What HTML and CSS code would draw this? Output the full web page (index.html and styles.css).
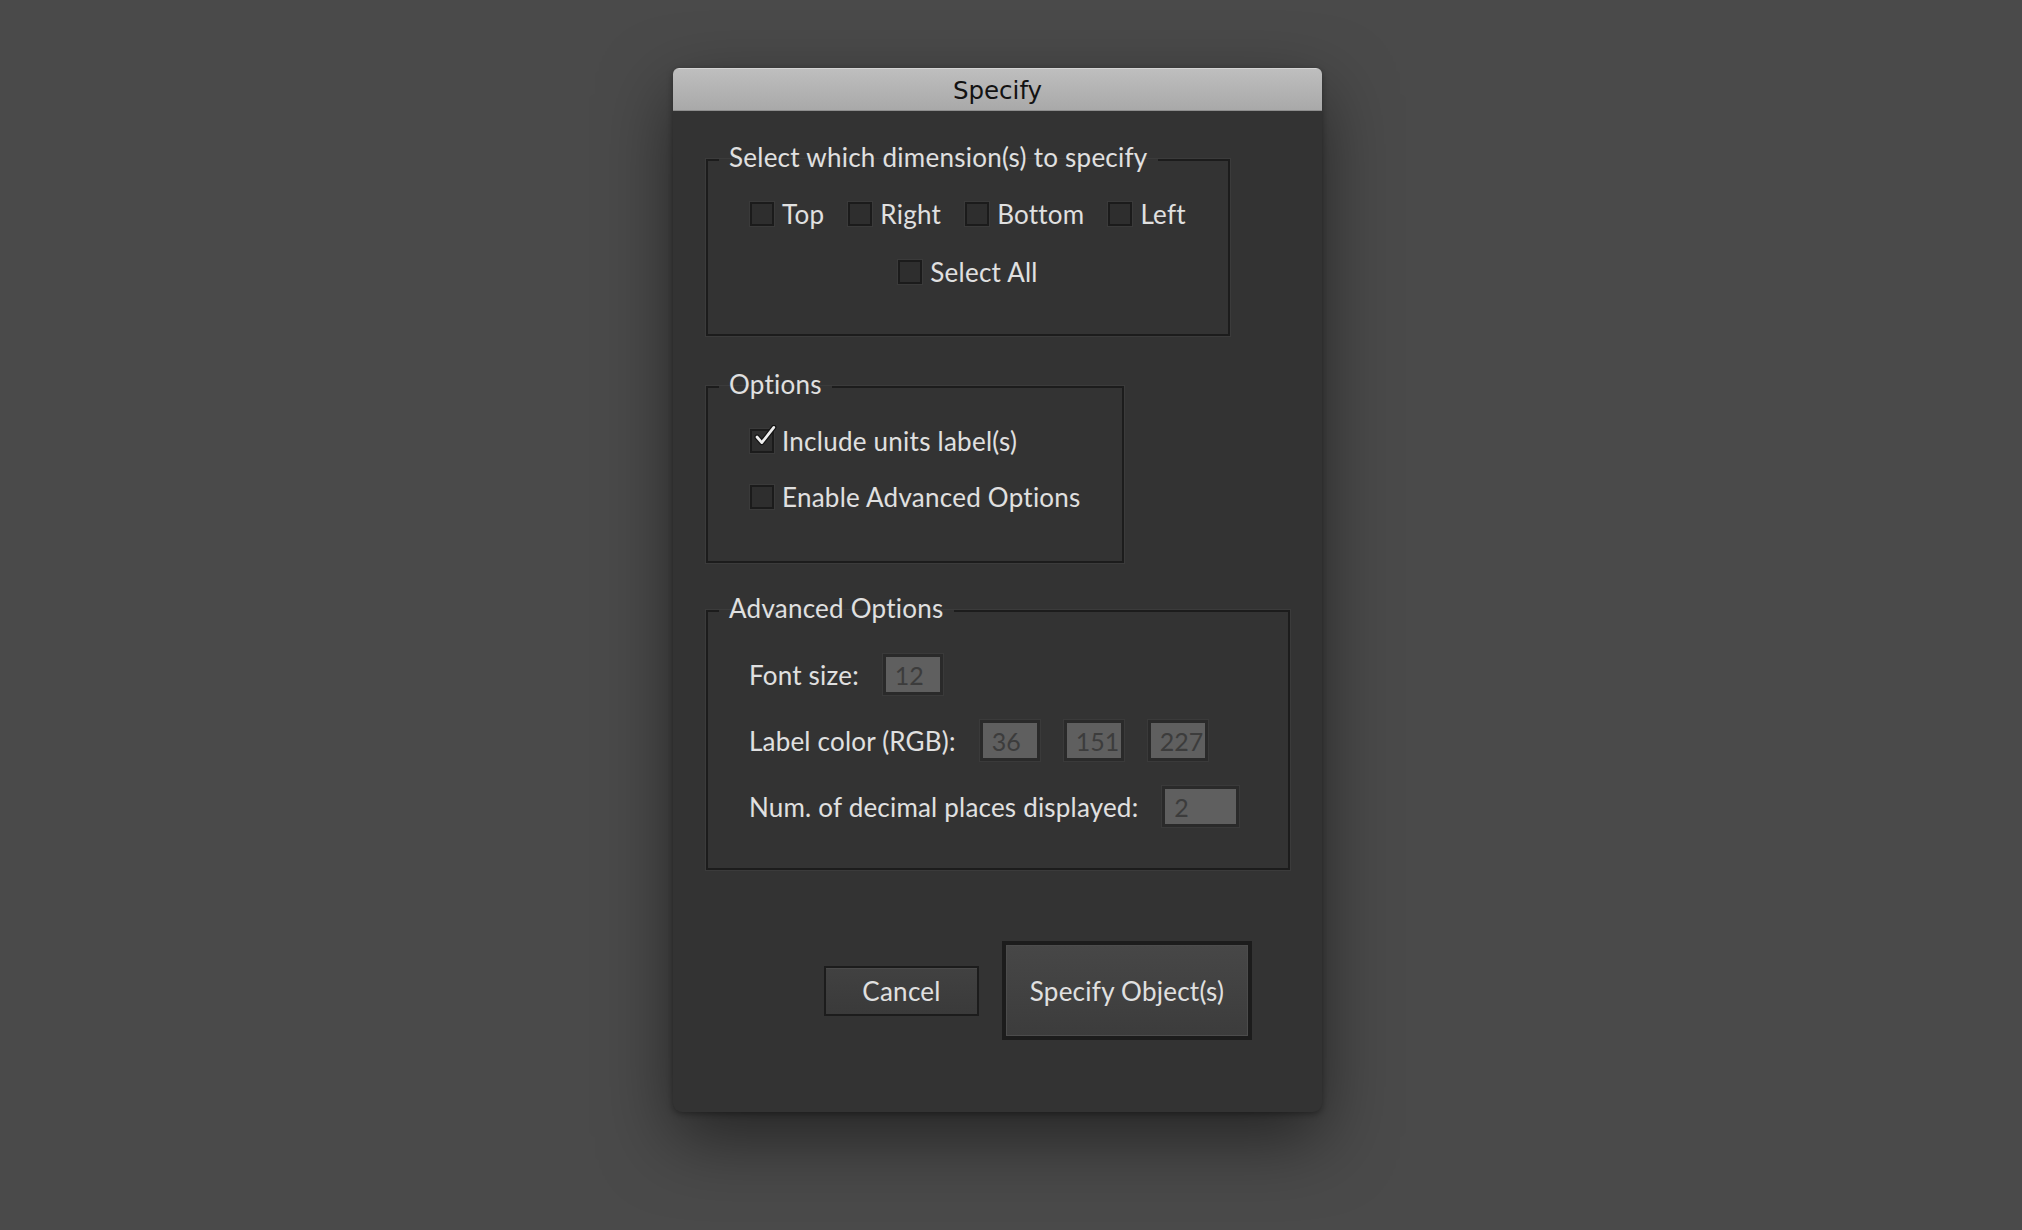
FILE: index.html
```html
<!DOCTYPE html>
<html>
<head>
<meta charset="utf-8">
<link rel="stylesheet" href="styles.css">
</head>
<body>
<div class="dialog">
  <div class="titlebar">Specify</div>
  <div class="dialog-body">
    <fieldset class="group group-dims">
      <legend>Select which dimension(s) to specify</legend>
      <div class="group-inner">
        <div class="check-row centered">
          <label class="check"><span class="box"></span><span>Top</span></label>
          <label class="check"><span class="box"></span><span>Right</span></label>
          <label class="check"><span class="box"></span><span>Bottom</span></label>
          <label class="check"><span class="box"></span><span>Left</span></label>
        </div>
        <div class="check-row centered">
          <label class="check"><span class="box"></span><span>Select All</span></label>
        </div>
      </div>
    </fieldset>

    <fieldset class="group group-options">
      <legend>Options</legend>
      <div class="group-inner">
        <div class="check-row">
          <label class="check"><span class="box checked"><svg class="tick" viewBox="0 0 30 30" width="30" height="30"><path d="M5 15 L11 22 L26 3" fill="none" stroke="#141414" stroke-width="6.5" stroke-linecap="round" stroke-linejoin="round"/><path d="M5 15 L11 22 L26 3" fill="none" stroke="#ededed" stroke-width="3.4" stroke-linecap="round" stroke-linejoin="round"/></svg></span><span>Include units label(s)</span></label>
        </div>
        <div class="check-row">
          <label class="check"><span class="box"></span><span>Enable Advanced Options</span></label>
        </div>
      </div>
    </fieldset>

    <fieldset class="group group-advanced">
      <legend>Advanced Options</legend>
      <div class="group-inner">
        <div class="field-row">
          <span class="field-label">Font size:</span>
          <span class="input">12</span>
        </div>
        <div class="field-row">
          <span class="field-label">Label color (RGB):</span>
          <span class="input">36</span>
          <span class="input">151</span>
          <span class="input">227</span>
        </div>
        <div class="field-row">
          <span class="field-label">Num. of decimal places displayed:</span>
          <span class="input wide">2</span>
        </div>
      </div>
    </fieldset>

    <div class="button-row">
      <button class="btn btn-cancel">Cancel</button>
      <button class="btn btn-default">Specify Object(s)</button>
    </div>
  </div>
</div>
</body>
</html>
```

FILE: styles.css
```css
html, body {
  margin: 0;
  padding: 0;
}

body {
  background: #4a4a4a;
  width: 2022px;
  height: 1230px;
  overflow: hidden;
  font-family: Lato, "Noto Sans", sans-serif;
  color: #e0e0e0;
}

.dialog {
  margin: 68px 0 0 673px;
  width: 649px;
  height: 1044px;
  background: #333333;
  border-radius: 6px 6px 9px 9px;
  box-shadow: 0 26px 70px rgba(0, 0, 0, 0.5), 0 2px 6px rgba(0, 0, 0, 0.35);
  overflow: hidden;
}

.titlebar {
  box-sizing: border-box;
  height: 43px;
  padding-top: 4px;
  border-top: 1px solid #d4d4d4;
  border-bottom: 1px solid #8e8e8e;
  background: linear-gradient(#bebebe, #a9a9a9);
  color: #121212;
  font-family: "DejaVu Sans", "Liberation Sans", sans-serif;
  font-size: 24.5px;
  line-height: 36px;
  text-align: center;
}

.dialog-body {
  padding: 31px 0 0 33px;
}

.group {
  box-sizing: border-box;
  margin: 0;
  padding: 0;
  border: 2px solid #1c1c1c;
  box-shadow: 0 0 0 1px #3b3b3b;
}

.group legend {
  margin-left: 11px;
  padding: 0 10px 5px;
  font-size: 26px;
  letter-spacing: 0.25px;
  line-height: 30px;
  color: #e0e0e0;
}

.group-dims {
  width: 524px;
}

.group-dims .group-inner {
  padding: 22px 0 47px;
  display: flex;
  flex-direction: column;
  gap: 28px;
}

.group-options {
  width: 418px;
  margin-top: 33px;
}

.group-options .group-inner {
  padding: 22px 0 49px 42px;
  display: flex;
  flex-direction: column;
  gap: 26px;
}

.group-advanced {
  width: 584px;
  margin-top: 30px;
}

.group-advanced .group-inner {
  padding: 26px 0 41px 41px;
  display: flex;
  flex-direction: column;
  gap: 25px;
}

.check-row {
  display: flex;
  align-items: center;
  gap: 26px;
  height: 30px;
}

.check-row.centered {
  justify-content: center;
  gap: 24px;
}

.check {
  display: flex;
  align-items: center;
  gap: 8px;
  font-size: 26px;
  letter-spacing: 0.25px;
  line-height: 30px;
}

.box {
  position: relative;
  box-sizing: border-box;
  width: 24px;
  height: 24px;
  background: #2e2e2e;
  border: 2px solid #1b1b1b;
  box-shadow: 0 0 0 1px #3a3a3a;
  flex: none;
}

.tick {
  position: absolute;
  left: 1px;
  top: -6px;
  width: 24px;
  height: 24px;
}

.field-row {
  display: flex;
  align-items: center;
  gap: 24px;
  height: 41px;
  font-size: 26px;
  letter-spacing: 0.2px;
}

.field-label {
  line-height: 30px;
}

.input {
  box-sizing: border-box;
  width: 60px;
  height: 41px;
  background: #5f5f5f;
  border: 3px solid #2a2a2a;
  box-shadow: 0 0 0 1px #3a3a3a;
  color: #3c3c3c;
  font-size: 25px;
  letter-spacing: 0;
  line-height: 37px;
  padding-left: 9px;
  white-space: nowrap;
  overflow: hidden;
}

.input.wide {
  width: 77px;
}

.button-row {
  margin-top: 71px;
  padding-left: 118px;
  display: flex;
  align-items: center;
  gap: 23px;
}

.btn {
  font-family: Lato, "Noto Sans", sans-serif;
  font-size: 26px;
  letter-spacing: 0.25px;
  color: #e0e0e0;
  box-sizing: border-box;
  padding: 0;
  cursor: default;
}

.btn-cancel {
  width: 155px;
  height: 50px;
  background: linear-gradient(#414141, #3a3a3a);
  border: 2px solid #1c1c1c;
  box-shadow: inset 0 1px 0 #4a4a4a;
}

.btn-default {
  width: 250px;
  height: 99px;
  background: linear-gradient(#474747, #3c3c3c);
  border: 4px solid #1c1c1c;
  box-shadow: inset 0 0 0 1px #4c4c4c;
}
```
